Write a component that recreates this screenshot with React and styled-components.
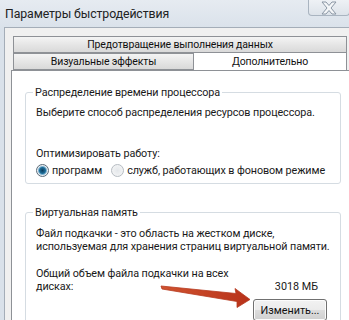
import React from 'react'
import styled, { createGlobalStyle } from 'styled-components'

const GlobalStyle = createGlobalStyle`
  html, body {
    margin: 0;
    padding: 0;
    background: #dfe6ed;
  }
  * { box-sizing: border-box; }
`

function App() {
  return (
    <Window>
      <GlobalStyle />
      <TitleBar>
        <Title>Параметры быстродействия</Title>
        <CloseButton>
          <svg width="18" height="14" viewBox="0 0 18 14">
            <path
              d="M2 1 L6 1 L9 4.5 L12 1 L16 1 L11 7 L16 13 L12 13 L9 9.5 L6 13 L2 13 L7 7 Z"
              fill="#f4f6f8"
              stroke="#8a96a4"
              strokeWidth="1"
              strokeLinejoin="round"
            />
          </svg>
        </CloseButton>
      </TitleBar>

      <Frame>
        <TabRow>
          <Tab>Предотвращение выполнения данных</Tab>
        </TabRow>
        <TabRow>
          <Tab $grow>Визуальные эффекты</Tab>
          <Tab $active>Дополнительно</Tab>
        </TabRow>

        <Panel>
          <Group $height={98}>
            <Legend>Распределение времени процессора</Legend>
            <Text>Выберите способ распределения ресурсов процессора.</Text>
            <Text $top={28}>Оптимизировать работу:</Text>
            <RadioRow>
              <RadioItem>
                <Radio $checked />
                программ
              </RadioItem>
              <RadioItem>
                <Radio />
                служб, работающих в фоновом режиме
              </RadioItem>
            </RadioRow>
          </Group>

          <Group $gap={22}>
            <Legend>Виртуальная память</Legend>
            <Text $top={8}>
              Файл подкачки - это область на жестком диске,
              <br />
              используемая для хранения страниц виртуальной памяти.
            </Text>
            <TotalRow>
              <Text $top={14}>
                Общий объем файла подкачки на всех
                <br />
                дисках:
              </Text>
              <Value>3018 МБ</Value>
            </TotalRow>
            <ButtonRow>
              <Button>Изменить...</Button>
            </ButtonRow>
          </Group>
        </Panel>
      </Frame>

      <Arrow width="349" height="320" viewBox="0 0 349 320">
        <defs>
          <linearGradient id="arrowFill" x1="0" y1="0" x2="1" y2="0">
            <stop offset="0" stopColor="#d0532f" />
            <stop offset="1" stopColor="#b8321a" />
          </linearGradient>
        </defs>
        <path
          d="M161 286 L236 293.5 L235 288.5 L250 299.5 L237 307.5 L237 301.5 L162 289 Z"
          fill="url(#arrowFill)"
          stroke="#b63a1f"
          strokeWidth="0.8"
          strokeLinejoin="round"
        />
      </Arrow>
    </Window>
  )
}

export default App

const Window = styled.div`
  position: relative;
  width: 349px;
  height: 320px;
  overflow: hidden;
  background: linear-gradient(#e6ebf1, #d9e1ea 30px);
  font-family: Roboto, "Liberation Sans", sans-serif;
  color: #1a1a1a;
  white-space: nowrap;
`

const TitleBar = styled.div`
  height: 27px;
  display: flex;
  justify-content: space-between;
  align-items: flex-start;
`

const Title = styled.div`
  padding: 5px 0 0 5px;
  font-size: 12.3px;
  letter-spacing: -0.1px;
  line-height: 18px;
  color: #222;
`

const CloseButton = styled.div`
  width: 42px;
  height: 16px;
  margin-right: -1px;
  display: flex;
  align-items: center;
  justify-content: center;
  border: 1px solid #a9b4c0;
  border-top: none;
  border-radius: 0 0 4px 4px;
  background: linear-gradient(#eef1f5, #dde3ea);
`

const Frame = styled.div`
  height: 293px;
  margin-left: 4px;
  padding: 8px 0 0 6px;
  background: #f0f0f0;
  border-top: 1px solid #a4adb8;
  border-left: 1px solid #a4adb8;
`

const TabRow = styled.div`
  display: flex;
  margin: 0 2px;
`

const Tab = styled.div`
  flex: ${p => (p.$grow ? '0 0 181px' : '1')};
  height: ${p => (p.$active ? '18px' : '17px')};
  margin-top: ${p => (p.$active ? '-1px' : '0')};
  margin-bottom: ${p => (p.$active ? '-1px' : '0')};
  position: relative;
  display: flex;
  align-items: center;
  justify-content: center;
  font-size: 10.5px;
  letter-spacing: -0.15px;
  color: #111;
  border: 1px solid #8e9196;
  border-bottom: ${p => (p.$active ? 'none' : '1px solid #8e9196')};
  background: ${p =>
    p.$active ? '#fff' : 'linear-gradient(#f4f4f4, #e6e6e6 50%, #d9d9d9)'};
  & + & {
    border-left: none;
  }
`

const Panel = styled.div`
  height: 260px;
  padding: 15px 8px 0 13px;
  background: #fff;
  border: 1px solid #8e9196;
  border-right: none;
  border-bottom: none;
`

const Group = styled.fieldset`
  margin: ${p => (p.$gap ? `${p.$gap}px 0 0` : '0')};
  height: ${p => (p.$height ? `${p.$height}px` : 'auto')};
  padding: 0 10px 10px 10px;
  border: 1px solid #d5dce2;
  border-radius: 3px;
`

const Legend = styled.legend`
  margin-left: -3px;
  padding: 0 2px;
  font-size: 10.8px;
  letter-spacing: -0.1px;
  line-height: 13px;
  color: #1a1a1a;
`

const Text = styled.div`
  margin-top: ${p => (p.$top ? `${p.$top}px` : '7px')};
  font-size: 10.8px;
  letter-spacing: -0.1px;
  line-height: 13px;
  color: #1a1a1a;
`

const RadioRow = styled.div`
  display: flex;
  gap: 9px;
  margin-top: 4px;
`

const RadioItem = styled.label`
  display: flex;
  align-items: center;
  gap: 3px;
  font-size: 10.8px;
  letter-spacing: -0.1px;
  line-height: 13px;
`

const Radio = styled.span`
  width: 13px;
  height: 13px;
  border-radius: 50%;
  border: 1px solid ${p => (p.$checked ? '#5b6b78' : '#b6bcc2')};
  background: ${p =>
    p.$checked
      ? 'radial-gradient(circle, #0b3b5c 0, #1f6f9a 3px, #7ab0cf 4px, #e9eef2 5px)'
      : 'radial-gradient(circle, #e4e7ea 0, #f3f4f5 6px)'};
`

const TotalRow = styled.div`
  display: flex;
  justify-content: space-between;
  align-items: flex-end;
  padding-right: 12px;
`

const Value = styled.div`
  font-size: 10.8px;
  line-height: 13px;
`

const ButtonRow = styled.div`
  display: flex;
  justify-content: flex-end;
  margin-top: 6px;
  padding-right: 3px;
`

const Button = styled.button`
  width: 74px;
  height: 22px;
  padding: 0;
  font-family: inherit;
  font-size: 10.8px;
  color: #111;
  border: 1px solid #707070;
  border-radius: 3px;
  background: linear-gradient(#f2f2f2, #ebebeb 50%, #dddddd 51%, #cfcfcf);
  box-shadow: inset 0 0 0 1px #fcfcfc;
`

const Arrow = styled.svg`
  position: absolute;
  left: 0;
  top: 0;
  pointer-events: none;
`
